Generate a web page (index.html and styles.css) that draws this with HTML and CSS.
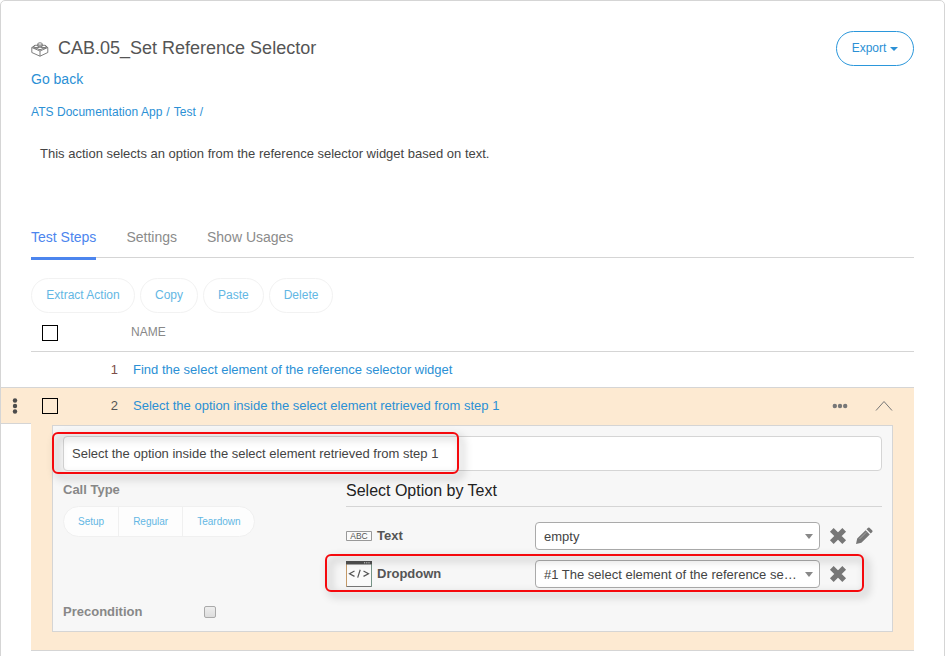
FILE: index.html
```
<!DOCTYPE html>
<html lang="en">
<head>
<meta charset="utf-8">
<title>CAB.05_Set Reference Selector</title>
<link rel="stylesheet" href="styles.css">
</head>
<body>
<main class="card">
  <header class="header">
    <div class="heading">
      <h1 class="title">
        <svg class="brick" width="18" height="15" viewBox="0 0 18 15" fill="none" stroke="#707070" stroke-width=".9">
          <path d="M4 3.500 .8 5.500v5L9 14.200l7.800-3.700v-5L14 3.500M.8 5.500 9 9l7.800-3.500M9 9v5.200"/>
          <path d="M6.700 2.200v1.500q2.300 1.500 4.600 0V2.200M2.700 4.400v1.300q2.300 1.500 4.600 0V4.400M10.700 4.400v1.300q2.300 1.500 4.600 0V4.400"/>
          <ellipse cx="9" cy="2" rx="2.300" ry="1.200"/><ellipse cx="5" cy="4.400" rx="2.300" ry="1.200"/><ellipse cx="13" cy="4.400" rx="2.300" ry="1.200"/><ellipse cx="9" cy="6.400" rx="2.300" ry="1.200"/>
        </svg>
        <span>CAB.05_Set Reference Selector</span>
      </h1>
      <a class="back">Go back</a>
    </div>
    <button class="export">Export <i class="caret"></i></button>
  </header>
  <nav class="crumbs"><a class="app">ATS Documentation App</a><span>/</span><a>Test</a><span>/</span></nav>
  <p class="description">This action selects an option from the reference selector widget based on text.</p>
  <nav class="tabs"><a class="tab active">Test Steps</a><a class="tab">Settings</a><a class="tab">Show Usages</a></nav>
  <div class="toolbar"><button class="tool extract">Extract Action</button><button class="tool">Copy</button><button class="tool">Paste</button><button class="tool">Delete</button></div>

  <section class="steps">
    <div class="row head"><span class="check"></span><span class="name">NAME</span></div>
    <div class="row"><span class="num first">1</span><a class="name">Find the select element of the reference selector widget</a></div>
    <div class="row selected">
      <span class="handle"><svg width="6" height="16" fill="#4c4c4c"><circle cx="3" cy="2.500" r="2.200"/><circle cx="3" cy="8" r="2.200"/><circle cx="3" cy="13.500" r="2.200"/></svg></span>
      <span class="check"></span><span class="num">2</span>
      <a class="name">Select the option inside the select element retrieved from step 1</a>
      <svg class="dots" width="16" height="6" fill="#777"><circle cx="2.800" cy="3" r="2.200"/><circle cx="8" cy="3" r="2.200"/><circle cx="13.200" cy="3" r="2.200"/></svg>
      <svg class="chevron" width="18" height="12" fill="none" stroke="#777"><path d="m1 10.500 8-9 8 9"/></svg>
    </div>
    <div class="details">
      <div class="panel">
        <div class="field">Select the option inside the select element retrieved from step 1</div>
        <div class="columns">
          <div class="left">
            <div class="label">Call Type</div>
            <div class="segments"><button>Setup</button><button>Regular</button><button>Teardown</button></div>
            <div class="precondition"><span class="label">Precondition</span><span class="box"></span></div>
          </div>
          <div class="right">
            <h2 class="subtitle">Select Option by Text</h2>
            <div class="param">
              <svg class="kind" width="26" height="26" viewBox="0 0 26 26"><path d="M.5 8.500h25v9H.5z" fill="#fafafa" stroke="#999"/><text x="13" y="16" text-anchor="middle" class="abc">ABC</text></svg>
              <span class="param-name">Text</span>
              <div class="select"><span>empty</span><i class="arrow"></i></div>
              <svg class="cross" width="18" height="18" viewBox="0 0 18 18" fill="none" stroke="#777" stroke-width="5.200"><path d="m2.800 2.800 12.400 12.400M15.200 2.800 2.800 15.200"/></svg>
              <svg class="pencil" width="18" height="18" viewBox="0 0 18 18" fill="#777"><path d="m1 17 1.200-5.400 8.400-8.400 4.200 4.200-8.400 8.400zM11.500 2.300l1.600-1.600q.7-.6 1.400 0l2.800 2.800q.6.7 0 1.400l-1.600 1.600z"/><path d="m4.600 11.900 6.700-6.700" stroke="#bbb" stroke-width=".7"/></svg>
            </div>
            <div class="param">
              <svg class="kind" width="26" height="26" viewBox="0 0 26 26"><path d="M.5.5h25v25H.5z" fill="#fafafa" stroke="#777"/><path d="M0 0h26v3.500H0z" fill="#505050"/><path d="M18 1.800h6" stroke="#ddd" stroke-dasharray="1.200 1"/><path d="M.5 3.500v22" stroke="#c49a68"/><path d="M25.500 3.500v22" stroke="#769487"/><path d="m8.500 10-5 2.700 5 2.700M17.500 10l5 2.700-5 2.700M14.200 8.800l-2.500 7.800" fill="none" stroke="#555" stroke-width="1.200"/></svg>
              <span class="param-name">Dropdown</span>
              <div class="select"><span>#1 The select element of the reference se…</span><i class="arrow"></i></div>
              <svg class="cross" width="18" height="18" viewBox="0 0 18 18" fill="none" stroke="#777" stroke-width="5.200"><path d="m2.800 2.800 12.400 12.400M15.200 2.800 2.800 15.200"/></svg>
            </div>
          </div>
        </div>
        <div class="mark mark-name"></div>
        <div class="mark mark-param"></div>
      </div>
    </div>
  </section>
</main>
</body>
</html>
```
FILE: styles.css
```
* { box-sizing: border-box; }
body { margin: 0; background: #fff; color: #444; font: 13px/16px "Liberation Sans", Arial, sans-serif; overflow: hidden; }
button { font: inherit; background: #fff; margin: 0; padding: 0; white-space: nowrap; }
svg { display: block; flex: none; }
h1, h2, p { margin: 0; font-weight: normal; }
.card { height: 670px; border: 1px solid #d5d5d5; border-radius: 5px 5px 0 0; padding: 30px 30px 0; }
.header { display: flex; justify-content: space-between; height: 73px; }
.heading { display: flex; flex-direction: column; }
.title { display: flex; align-items: center; gap: 9px; height: 34px; font-size: 18px; line-height: 34px; color: #555; }
.brick { margin-top: 3px; }
.back { margin-top: 6px; font-size: 14px; line-height: 16px; color: #2b90d5; }
.export { width: 78px; height: 35px; padding-bottom: 2px; border: 1px solid #2b97db; border-radius: 18px; color: #2b90d5; font-size: 12px; display: flex; align-items: center; justify-content: center; gap: 4px; }
.caret { border: 4px solid transparent; border-top-color: #2b90d5; border-bottom: 0; margin-top: 2px; }
.crumbs { display: flex; gap: 4px; font-size: 12px; line-height: 16px; color: #2b90d5; }
.app { letter-spacing: .04px; }
.description { padding: 26px 9px 0; height: 106px; }
.tabs { display: flex; gap: 30px; height: 32px; margin-bottom: 20px; border-bottom: 1px solid #d5d5d5; }
.tab { font-size: 14px; line-height: 16px; color: #8b8b8b; margin-top: 3px; height: 31px; }
.tab.active { color: #4c85ee; border-bottom: 3px solid #4c85ee; }
.toolbar { display: flex; gap: 5px; height: 35px; }
.tool { height: 35px; padding: 0 14px 2px; border: 1px solid #f2f2f2; border-radius: 18px; color: #63b7e4; font-size: 12px; }
.tool.extract { width: 104px; }
.row { display: flex; align-items: center; height: 36px; border-bottom: 1px solid #d5d5d5; }
.row.head { height: 39px; }
.row .name { color: #2b90d5; margin-left: 15px; }
.row.head .name { color: #888; font-size: 12px; margin-left: 73px; }
.check { width: 16px; height: 16px; margin-left: 11px; border: 1px solid #000; background: #fff; flex: none; }
.head .check { margin-top: 2px; }
.selected .check { background: none; }
.num { width: 60px; text-align: right; color: #555; }
.num.first { width: 87px; color: #7d4d49; }
.row.selected { background: #fdead2; border-bottom: 0; margin-left: -30px; }
.handle { width: 30px; height: 37px; margin-top: -1px; padding-right: 2px; background: #fdead2; border: solid #d5d5d5; border-width: 1px 0; display: flex; align-items: center; justify-content: center; }
.dots { margin-left: auto; }
.chevron { margin: 0 21px 0 27px; }
.details { height: 227px; padding: 1px 21px 19px; background: #fdead2; border-bottom: 1px solid #d5d5d5; }
.panel { position: relative; height: 207px; border: 1px solid #d5d5d5; background: #f7f7f7; padding: 10px; }
.field { height: 35px; border: 1px solid #d5d5d5; border-radius: 4px; background: #fff; padding: 0 8px; line-height: 33px; }
.columns { display: flex; }
.left { width: 283px; }
.right { flex: 1; }
.label { font-weight: bold; color: #888; }
.left > .label { margin-top: 11px; }
.segments { display: flex; width: 192px; height: 31px; margin-top: 8px; border: 1px solid #f0f0f0; border-radius: 16px; overflow: hidden; background: #fdfdfd; }
.segments button { border: 0; background: none; color: #63b7e4; font-size: 10px; padding: 0 14px; }
.segments button + button { border-left: 1px solid #f0f0f0; }
.precondition { display: flex; align-items: center; margin-top: 67px; }
.precondition .label { width: 141px; }
.box { width: 12px; height: 12px; border: 1px solid #aaa; border-radius: 2px; background: linear-gradient(#eee, #ddd); }
.subtitle { height: 36px; border-bottom: 1px solid #d5d5d5; color: #222; font-size: 16px; line-height: 40px; margin-bottom: 15px; }
.param { display: flex; align-items: center; height: 28px; margin-bottom: 10px; }
.param-name { width: 158px; margin-left: 5px; font-weight: bold; color: #555; }
.select { width: 285px; height: 28px; border: 1px solid #aaa; border-radius: 4px; background: #fff; color: #444; padding: 1px 6px 0 8px; display: flex; align-items: center; justify-content: space-between; }
.arrow { border: 4px solid transparent; border-top: 5px solid #888; border-bottom: 0; }
.cross { margin-left: 9px; }
.pencil { margin-left: 8px; }
.abc { font: 8.5px "Liberation Sans", Arial, sans-serif; fill: #555; }
.mark { position: absolute; border: 2px solid #f5090d; border-radius: 6px; filter: drop-shadow(4px 4px 4px rgba(0, 0, 0, .4)); }
.mark-name { left: -1px; top: 6px; width: 407px; height: 42px; }
.mark-param { left: 272px; top: 128px; width: 539px; height: 38px; }
```
